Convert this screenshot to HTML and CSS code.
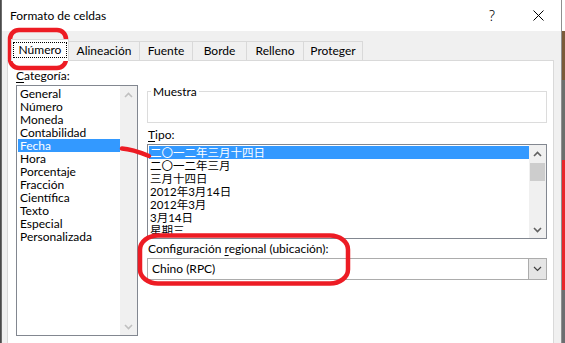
FILE: index.html
```html
<!DOCTYPE html>
<html lang="es">
<head>
<meta charset="utf-8">
<title>Formato de celdas</title>
<link rel="stylesheet" href="styles.css">
</head>
<body>
<div class="window">
  <div class="titlebar">
    <div class="title">Formato de celdas</div>
    <div class="caption-btn help">?</div>
    <div class="caption-btn close"><svg width="11" height="11" viewBox="0 0 11 11"><path d="M0.5 0.5 L10.5 10.5 M10.5 0.5 L0.5 10.5" stroke="#000" stroke-width="1" fill="none"/></svg></div>
  </div>
  <div class="client">
    <div class="tabs">
      <div class="tab selected"><span class="focus">Número</span></div>
      <div class="tab t-alin">Alineación</div>
      <div class="tab t-fuen">Fuente</div>
      <div class="tab t-bord">Borde</div>
      <div class="tab t-rell">Relleno</div>
      <div class="tab t-prot">Proteger</div>
    </div>
    <div class="panel">
      <div class="col-left">
        <div class="label"><u>C</u>ategoría:</div>
        <div class="listbox cat">
          <ul class="items">
            <li>General</li>
            <li>Número</li>
            <li>Moneda</li>
            <li>Contabilidad</li>
            <li class="sel">Fecha</li>
            <li>Hora</li>
            <li>Porcentaje</li>
            <li>Fracción</li>
            <li>Científica</li>
            <li>Texto</li>
            <li>Especial</li>
            <li>Personalizada</li>
          </ul>
          <div class="vscroll disabled">
            <div class="sbtn"><svg width="9" height="6" viewBox="0 0 9 6"><polyline points="1,5 4.5,1.5 8,5"/></svg></div>
            <div class="track"></div>
            <div class="sbtn"><svg width="9" height="6" viewBox="0 0 9 6"><polyline points="1,1 4.5,4.5 8,1"/></svg></div>
          </div>
        </div>
      </div>
      <div class="col-right">
        <div class="sample"><span class="legend">Muestra</span></div>
        <div class="label lbl-tipo"><u>T</u>ipo:</div>
        <div class="listbox tipo">
          <ul class="items cjk">
            <li class="sel">二〇一二年三月十四日</li>
            <li>二〇一二年三月</li>
            <li>三月十四日</li>
            <li>2012年3月14日</li>
            <li>2012年3月</li>
            <li>3月14日</li>
            <li>星期三</li>
          </ul>
          <div class="vscroll">
            <div class="sbtn"><svg width="9" height="6" viewBox="0 0 9 6"><polyline points="1,5 4.5,1.5 8,5"/></svg></div>
            <div class="track"><div class="thumb"></div></div>
            <div class="sbtn"><svg width="9" height="6" viewBox="0 0 9 6"><polyline points="1,1 4.5,4.5 8,1"/></svg></div>
          </div>
        </div>
        <div class="label lbl-conf">Configuración <u>r</u>egional (ubicación):</div>
        <div class="combo">
          <span class="combo-text">Chino (RPC)</span>
          <span class="combo-btn"><svg width="9" height="6" viewBox="0 0 9 6"><polyline points="1,1 4.5,4.5 8,1"/></svg></span>
        </div>
      </div>
    </div>
  </div>
</div>
<svg class="annot" width="565" height="343" viewBox="0 0 565 343">
  <rect x="10" y="30" width="56" height="38" rx="9" ry="9"/>
  <path d="M122 148.5 Q132 149 149 156"/>
  <rect x="140" y="235.5" width="208" height="48" rx="18" ry="14"/>
</svg>
</body>
</html>
```

FILE: styles.css
```css
html, body {
  margin: 0;
  padding: 0;
  height: 343px;
  overflow: hidden;
}

body {
  position: relative;
  background: #4a4a4a linear-gradient(to bottom, #ffffff 0 31px, #7a5b3a 31px 80px, #6b6f6c 80px 160px, #e8262a 160px 290px, #6c6e70 290px 343px) right top / 3px 100% no-repeat;
  font-family: Lato, "Noto Sans", sans-serif;
  font-size: 12px;
  color: #000;
}

.window {
  margin-left: 1px;
  width: 559px;
  height: 343px;
  border-left: 1px solid #6d6d6d;
  border-right: 1px solid #8f8f8f;
  background: #f0f0f0;
  overflow: hidden;
}

.titlebar {
  height: 31px;
  background: #fff;
  display: flex;
  align-items: center;
}

.title {
  flex: 1;
  padding-left: 8px;
  line-height: 16px;
}

.caption-btn {
  width: 46px;
  height: 31px;
  display: flex;
  align-items: center;
  justify-content: center;
}

.help {
  font-family: "Noto Sans", sans-serif;
  font-size: 14px;
  font-weight: 300;
}

.client {
  padding: 0 7px 0 5px;
}

.tabs {
  display: flex;
  align-items: flex-end;
  height: 21px;
  margin-top: 8px;
  padding-left: 4px;
}

.tab {
  box-sizing: border-box;
  height: 19px;
  line-height: 17px;
  text-align: center;
  background: #f0f0f0;
  border-top: 1px solid #d9d9d9;
  border-right: 1px solid #d9d9d9;
}

.tab.selected {
  position: relative;
  z-index: 1;
  width: 58px;
  height: 22px;
  margin-bottom: -1px;
  background: #fff;
  border-left: 1px solid #d9d9d9;
}

.focus {
  display: block;
  box-sizing: border-box;
  height: 16px;
  margin: 2px 1px 0 1px;
  line-height: 14px;
  border: 1px dotted #000;
}

.t-alin { width: 71px; }
.t-fuen { width: 53px; }
.t-bord { width: 54px; }
.t-rell { width: 57px; }
.t-prot { width: 59px; }

.panel {
  box-sizing: border-box;
  height: 300px;
  border: 1px solid #d9d9d9;
  background: #fff;
  display: flex;
  gap: 9px;
  padding: 0 6px 0 8px;
}

.col-left {
  width: 122px;
  padding-top: 7px;
}

.label {
  height: 16px;
  line-height: 16px;
  white-space: nowrap;
}

.label u {
  text-decoration-thickness: 1px;
  text-underline-offset: 2px;
}

.col-left .label {
  margin-bottom: 1px;
}

.listbox {
  box-sizing: border-box;
  display: flex;
  border: 1px solid #828790;
  background: #fff;
}

.listbox.cat {
  height: 251px;
}

.items {
  flex: 1;
  margin: 0;
  padding: 1px 0 0 1px;
  list-style: none;
  overflow: hidden;
}

.items li {
  height: 13px;
  line-height: 13px;
  padding-left: 2px;
  white-space: nowrap;
}

.items li.sel {
  background: #3399ff;
  color: #fff;
}

.cjk {
  font-family: Lato, "Noto Sans CJK SC", sans-serif;
  font-size: 11.5px;
}

.cjk li {
  padding-left: 1px;
}

.vscroll {
  width: 17px;
  background: #f0f0f0;
  display: flex;
  flex-direction: column;
}

.sbtn {
  height: 17px;
  display: flex;
  align-items: center;
  justify-content: center;
}

.sbtn polyline,
.combo-btn polyline {
  fill: none;
  stroke: #606060;
  stroke-width: 1.6;
}

.vscroll.disabled polyline {
  stroke: #c0c0c0;
}

.track {
  flex: 1;
}

.thumb {
  height: 18px;
  margin: 1px 1px 0 1px;
  background: #cdcdcd;
}

.col-right {
  width: 400px;
  padding-top: 30px;
}

.sample {
  box-sizing: border-box;
  height: 32px;
  border: 1px solid #dcdcdc;
}

.legend {
  display: block;
  width: max-content;
  margin: -6px 0 0 3px;
  padding: 0 2px;
  line-height: 12px;
  background: #fff;
}

.lbl-tipo {
  margin: 4px 0 1px 1px;
}

.listbox.tipo {
  height: 95px;
}

.lbl-conf {
  margin: 2px 0 1px 1px;
}

.combo {
  box-sizing: border-box;
  height: 22px;
  display: flex;
  align-items: stretch;
  border: 1px solid #acacac;
  background: #fff;
}

.combo-text {
  flex: 1;
  padding-left: 4px;
  line-height: 20px;
}

.combo-btn {
  width: 17px;
  background: #e5e5e5;
  border-left: 1px solid #acacac;
  display: flex;
  align-items: center;
  justify-content: center;
}

.combo-btn polyline {
  stroke: #404040;
  stroke-width: 1.2;
}

.annot {
  position: absolute;
  top: 0;
  left: 0;
  pointer-events: none;
}

.annot rect,
.annot path {
  fill: none;
  stroke: #ed1c24;
  stroke-width: 4.5;
  stroke-linecap: round;
}
```
